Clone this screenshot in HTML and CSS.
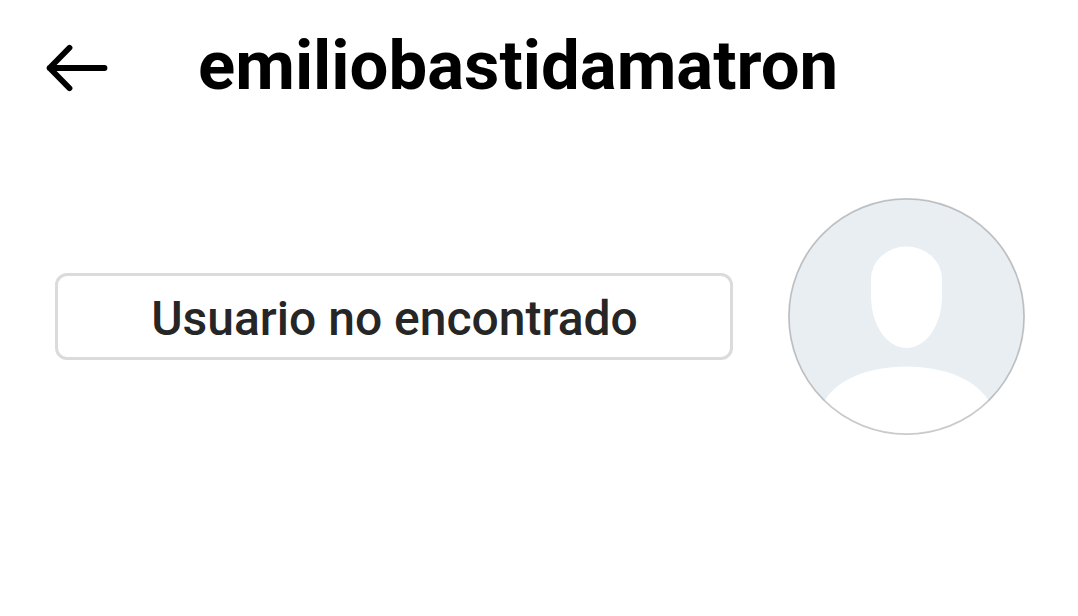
FILE: index.html
```html
<!DOCTYPE html>
<html lang="es">
<head>
  <meta charset="UTF-8" />
  <meta name="viewport" content="width=device-width, initial-scale=1" />
  <title>emiliobastidamatron</title>
  <link rel="stylesheet" href="styles.css">
</head>
<body>

<header class="top-bar">
  <button class="back-btn" aria-label="Volver">
    <svg viewBox="0 0 62 48" width="62" height="48">
      <path d="M23.500 3.800 L3.600 24 L23.500 44.200 M3.600 24 H58.500" />
    </svg>
  </button>
  <h1 class="username">emiliobastidamatron</h1>
</header>

<main class="profile">
  <button class="status-btn">Usuario no encontrado</button>
  <svg class="avatar" viewBox="0 0 237 237" width="237" height="237">
    <defs>
      <clipPath id="circle"><circle cx="118.5" cy="118.5" r="118" /></clipPath>
    </defs>
    <g clip-path="url(#circle)">
      <rect class="avatar-bg" width="237" height="237" />
      <path class="avatar-shape" d="M83 81 A35.500 32.500 0 0 1 154 81 V99 A35.500 51 0 0 1 83 99 Z" />
      <path class="avatar-shape" d="M34 207 C46 182 80 168.500 118.500 168.500 C157 168.500 191 182 203 207 V237 H34 Z" />
    </g>
    <circle class="avatar-ring" cx="118.5" cy="118.5" r="117.6" />
  </svg>
</main>

</body>
</html>
```
FILE: styles.css
```css
* { box-sizing: border-box; }

body {
  margin: 0;
  font-family: Roboto, sans-serif;
  background: #fff;
  color: #000;
}

button {
  font-family: inherit;
  background: none;
  cursor: pointer;
}

.top-bar {
  display: flex;
  align-items: center;
  height: 136px;
  padding-left: 46px;
}

.back-btn {
  display: flex;
  padding: 0;
  border: none;
}

.back-btn path {
  fill: none;
  stroke: #000;
  stroke-width: 5.8;
  stroke-linecap: round;
  stroke-linejoin: round;
}

.username {
  margin: -4px 0 0 90px;
  font-size: 68.9px;
  font-weight: 700;
  line-height: 80px;
}

.profile {
  display: flex;
  align-items: center;
  justify-content: space-between;
  padding: 62px 53px 0 55px;
}

.status-btn {
  width: 678px;
  height: 87px;
  padding: 4px 0 0 1px;
  border: 3px solid #dbdbdb;
  border-radius: 12px;
  color: #262626;
  font-size: 48px;
  font-weight: 500;
}

.avatar { display: block; }
.avatar-bg { fill: #e9eef2; }
.avatar-shape { fill: #fff; }

.avatar-ring {
  fill: none;
  stroke: rgba(0, 0, 0, 0.2);
  stroke-width: 1.8;
}
```
